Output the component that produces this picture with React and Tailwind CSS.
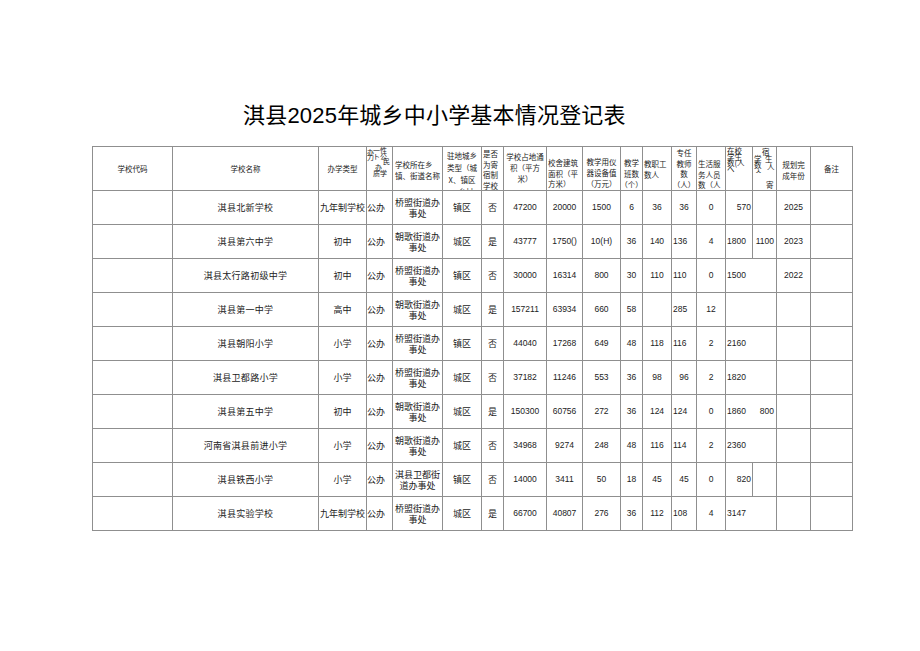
import React from "react";

const GRID =
  "grid grid-cols-[80px_146px_48px_26px_50px_39px_22px_43px_36px_38px_22px_29px_25px_29px_27px_24px_34px_42px]";

const rows = [
  { name: "淇县北新学校", type: "九年制学校", town: ["桥盟街道办", "事处"], area: "镇区", board: "否", land: "47200", build: "20000", equip: "1500", cls: "6", staff: "36", teach: "36", tAlign: "c", svc: "0", stu: "570", sAlign: "r", bd: "", year: "2025", line14: true },
  { name: "淇县第六中学", type: "初中", town: ["朝歌街道办", "事处"], area: "城区", board: "是", land: "43777", build: "1750()", equip: "10(H)", cls: "36", staff: "140", teach: "136", tAlign: "l", svc: "4", stu: "1800", sAlign: "l", bd: "1100", year: "2023", line14: true },
  { name: "淇县太行路初级中学", type: "初中", town: ["桥盟街道办", "事处"], area: "镇区", board: "否", land: "30000", build: "16314", equip: "800", cls: "30", staff: "110", teach: "110", tAlign: "l", svc: "0", stu: "1500", sAlign: "l", bd: "", year: "2022", line14: false },
  { name: "淇县第一中学", type: "高中", town: ["朝歌街道办", "事处"], area: "城区", board: "是", land: "157211", build: "63934", equip: "660", cls: "58", staff: "", teach: "285", tAlign: "l", svc: "12", stu: "", sAlign: "l", bd: "", year: "", line14: false },
  { name: "淇县朝阳小学", type: "小学", town: ["桥盟街道办", "事处"], area: "镇区", board: "否", land: "44040", build: "17268", equip: "649", cls: "48", staff: "118", teach: "116", tAlign: "l", svc: "2", stu: "2160", sAlign: "l", bd: "", year: "", line14: false },
  { name: "淇县卫都路小学", type: "小学", town: ["桥盟街道办", "事处"], area: "城区", board: "否", land: "37182", build: "11246", equip: "553", cls: "36", staff: "98", teach: "96", tAlign: "c", svc: "2", stu: "1820", sAlign: "l", bd: "", year: "", line14: false },
  { name: "淇县第五中学", type: "初中", town: ["朝歌街道办", "事处"], area: "城区", board: "是", land: "150300", build: "60756", equip: "272", cls: "36", staff: "124", teach: "124", tAlign: "l", svc: "0", stu: "1860", sAlign: "l", bd: "800", year: "", line14: false },
  { name: "河南省淇县前进小学", type: "小学", town: ["朝歌街道办", "事处"], area: "城区", board: "否", land: "34968", build: "9274", equip: "248", cls: "48", staff: "116", teach: "114", tAlign: "l", svc: "2", stu: "2360", sAlign: "l", bd: "", year: "", line14: false },
  { name: "淇县铁西小学", type: "小学", town: ["淇县卫都街", "道办事处"], area: "镇区", board: "否", land: "14000", build: "3411", equip: "50", cls: "18", staff: "45", teach: "45", tAlign: "c", svc: "0", stu: "820", sAlign: "r", bd: "", year: "", line14: true },
  { name: "淇县实验学校", type: "九年制学校", town: ["桥盟街道办", "事处"], area: "城区", board: "是", land: "66700", build: "40807", equip: "276", cls: "36", staff: "112", teach: "108", tAlign: "l", svc: "4", stu: "3147", sAlign: "l", bd: "", year: "", line14: false },
];

const cjk = "font-['Noto_Sans_CJK_SC',sans-serif]";
const num = "font-['Liberation_Sans',Arial,sans-serif]";

function Cell({ children, className = "" }) {
  return (
    <div className={"flex h-full items-center overflow-hidden border-r border-[#8f8f8f] " + className}>
      {children}
    </div>
  );
}

function Header() {
  return (
    <div className={GRID + " h-[44px] border-b border-[#8f8f8f] text-[7.5px] leading-[11px] text-[#222] " + cjk}>
      <Cell className="justify-center">学校代码</Cell>
      <Cell className="justify-center">学校名称</Cell>
      <Cell className="justify-center">办学类型</Cell>
      <div className="relative h-full overflow-hidden border-r border-[#8f8f8f] text-[7px] leading-none">
        <span className="absolute left-0 top-[2px]">办</span>
        <span className="absolute left-0 top-[7px]">力</span>
        <span className="absolute left-[6px] top-[0px]">一性</span>
        <span className="absolute left-[6px] top-[6px]">ト公</span>
        <span className="absolute left-[16px] top-[11px]">民</span>
        <span className="absolute left-[8px] top-[17px]">办</span>
        <span className="absolute left-[6px] top-[23px]">质学</span>
      </div>
      <Cell className="flex-col items-start justify-center pl-[2px] pt-[2px] text-left">
        <span>学校所在乡</span>
        <span className="whitespace-nowrap">镇、街道名称</span>
      </Cell>
      <div className="flex h-full flex-col items-center overflow-hidden border-r border-[#8f8f8f] pt-[3px] leading-[12px]">
        <span>驻地城乡</span>
        <span>类型（城</span>
        <span>X、镇区</span>
        <span>、乡村</span>
      </div>
      <div className="flex h-full flex-col items-start overflow-hidden border-r border-[#8f8f8f] pl-[1px] pt-[2px] leading-[10.5px]">
        <span>是否</span>
        <span>为寄</span>
        <span>宿制</span>
        <span>学校</span>
      </div>
      <div className="flex h-full flex-col items-center overflow-hidden border-r border-[#8f8f8f] pt-[4px] leading-[11px]">
        <span className="whitespace-nowrap">学校占地通</span>
        <span>积（平方</span>
        <span>米）</span>
      </div>
      <div className="flex h-full flex-col items-start overflow-hidden border-r border-[#8f8f8f] pl-[1px] pt-[11px] leading-[10.5px]">
        <span className="whitespace-nowrap">校舍建筑</span>
        <span className="whitespace-nowrap">面积（平</span>
        <span>方米）</span>
      </div>
      <div className="flex h-full flex-col items-center overflow-hidden border-r border-[#8f8f8f] pt-[9px] leading-[11px]">
        <span className="whitespace-nowrap">教学用仪</span>
        <span className="whitespace-nowrap">器设备值</span>
        <span>（万元）</span>
      </div>
      <div className="flex h-full flex-col items-center overflow-hidden border-r border-[#8f8f8f] pt-[10px] leading-[11px]">
        <span>教学</span>
        <span>班数</span>
        <span className="whitespace-nowrap">（个）</span>
      </div>
      <Cell className="flex-col items-start justify-center pl-[1px] leading-[11px]">
        <span className="whitespace-nowrap">教职工</span>
        <span>数人</span>
      </Cell>
      <div className="flex h-full flex-col items-center overflow-hidden border-r border-[#8f8f8f] pt-[1px] leading-[10.5px]">
        <span>专任</span>
        <span>教师</span>
        <span>数</span>
        <span className="whitespace-nowrap">（人）</span>
      </div>
      <div className="flex h-full flex-col items-start overflow-hidden border-r border-[#8f8f8f] pl-[1px] pt-[12px] leading-[10.5px]">
        <span className="whitespace-nowrap">生活服</span>
        <span className="whitespace-nowrap">务人员</span>
        <span className="whitespace-nowrap">数（人</span>
      </div>
      <div className="relative h-full overflow-hidden border-r border-[#8f8f8f] leading-none">
        <span className="absolute left-[1px] top-[0px]">在校</span>
        <span className="absolute left-[1px] top-[6px]">学生</span>
        <span className="absolute left-[1px] top-[12px] whitespace-nowrap">数(人</span>
        <span className="absolute left-[1px] top-[18px]">へ</span>
      </div>
      <div className="relative h-full overflow-hidden border-r border-[#8f8f8f] leading-none">
        <span className="absolute left-[9px] top-[1px]">宿</span>
        <span className="absolute left-[1px] top-[8px]">学</span>
        <span className="absolute left-[12px] top-[8px]">生</span>
        <span className="absolute left-[1px] top-[14px]">数</span>
        <span className="absolute left-[14px] top-[16px]">人</span>
        <span className="absolute left-[2px] top-[20px]">ㅅ</span>
        <span className="absolute left-[13px] top-[34px]">寄</span>
      </div>
      <Cell className="flex-col items-center justify-center pt-[2px] leading-[11px]">
        <span className="whitespace-nowrap">规划完</span>
        <span className="whitespace-nowrap">成年份</span>
      </Cell>
      <Cell className="justify-center">备注</Cell>
    </div>
  );
}

function DataRow({ r }) {
  return (
    <div className={GRID + " h-[34px] border-b border-[#8f8f8f] text-[#222]"}>
      <Cell />
      <Cell className={"justify-center text-[9px] tracking-[0.3px] " + cjk}>{r.name}</Cell>
      <Cell className={"justify-center whitespace-nowrap text-[9px] " + cjk}>{r.type}</Cell>
      <Cell className={"justify-start whitespace-nowrap text-[9px] " + cjk}>公办</Cell>
      <Cell className={"flex-col justify-center text-[9px] leading-[11px] " + cjk}>
        <span className="whitespace-nowrap">{r.town[0]}</span>
        <span className="whitespace-nowrap">{r.town[1]}</span>
      </Cell>
      <Cell className={"justify-center text-[9px] " + cjk}>{r.area}</Cell>
      <Cell className={"justify-center text-[9px] " + cjk}>{r.board}</Cell>
      <Cell className={"justify-center text-[8.5px] " + num}>{r.land}</Cell>
      <Cell className={"justify-center text-[8.5px] " + num}>{r.build}</Cell>
      <Cell className={"justify-center text-[8.5px] " + num}>{r.equip}</Cell>
      <Cell className={"justify-center text-[8.5px] " + num}>{r.cls}</Cell>
      <Cell className={"justify-center text-[8.5px] " + num}>{r.staff}</Cell>
      <Cell className={(r.tAlign === "l" ? "justify-start pl-[1px]" : "justify-center") + " text-[8.5px] " + num}>{r.teach}</Cell>
      <Cell className={"justify-center text-[8.5px] " + num}>{r.svc}</Cell>
      <div
        className={
          "flex h-full items-center overflow-hidden text-[8.5px] " +
          num +
          (r.line14 ? " border-r border-[#8f8f8f]" : " border-r border-transparent") +
          (r.sAlign === "r" ? " justify-end pr-[1px]" : " justify-start pl-[1px]")
        }
      >
        {r.stu}
      </div>
      <Cell className={"justify-end pr-[2px] text-[8.5px] " + num}>{r.bd}</Cell>
      <Cell className={"justify-center text-[8.5px] " + num}>{r.year}</Cell>
      <Cell />
    </div>
  );
}

export default function App() {
  return (
    <div className="h-[651px] w-[920px] bg-white pt-[104px]">
      <div className="ml-[243px] h-[23px] whitespace-nowrap text-[22px] leading-[23px] tracking-[0.2px] text-black font-['Liberation_Sans','Noto_Sans_CJK_SC',sans-serif]">
        淇县2025年城乡中小学基本情况登记表
      </div>
      <div className="ml-[92px] mt-[19px] w-[761px] border-l border-t border-[#8f8f8f]">
        <Header />
        {rows.map((r, i) => (
          <DataRow key={i} r={r} />
        ))}
      </div>
    </div>
  );
}
